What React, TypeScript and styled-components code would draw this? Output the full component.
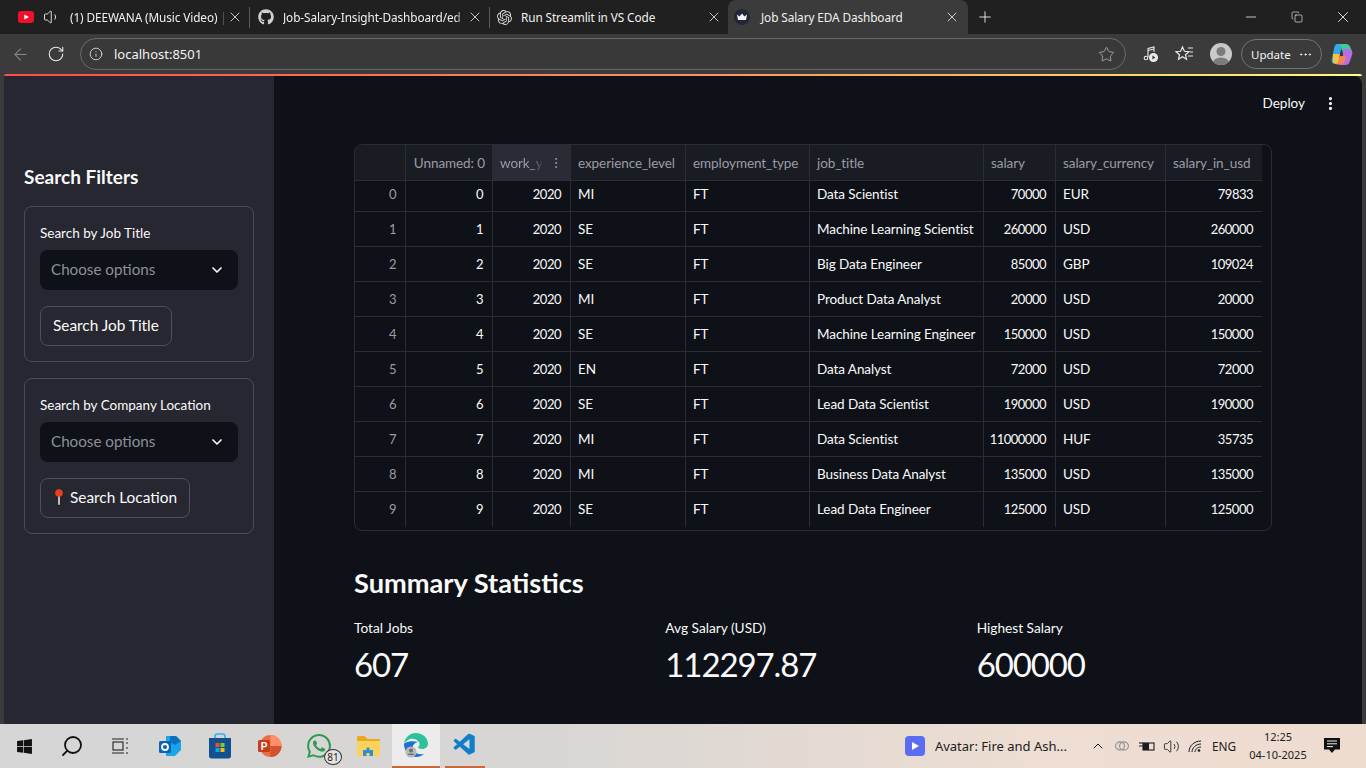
import React from "react";
import styled, { createGlobalStyle } from "styled-components";
import { ArrowLeft, ChevronDown, ChevronUp, Copy, Ellipsis, EllipsisVertical, Info, Minus, Plus, RotateCw, Star, Volume1, Volume2, X, Search } from "lucide-react";
import { FaGithub, FaWindows } from "react-icons/fa";
import { SiOpenai, SiWhatsapp } from "react-icons/si";
import { VscVscode } from "react-icons/vsc";

const UI_FONT = `"Noto Sans", "Liberation Sans", sans-serif`;
const APP_FONT = `"Lato", "Noto Sans", sans-serif`;

const GlobalStyle = createGlobalStyle`
    html, body {
        margin: 0;
        padding: 0;
        width: 1366px;
        height: 768px;
        overflow: hidden;
        background: #202020;
    }
    * { box-sizing: border-box; }
`;

const Window = styled.div`
    display: flex;
    flex-direction: column;
    width: 1366px;
    height: 768px;
    font-family: ${UI_FONT};
`;

/* browser chrome */
const TabStrip = styled.div`
    display: flex;
    align-items: stretch;
    height: 34px;
    padding-left: 8px;
    background: #202020;
    color: #f0f0f0;
`;
const Tab = styled.div<{ $active?: boolean; $width: number; $pad?: number }>`
    display: flex;
    align-items: center;
    gap: ${(p) => (p.$active ? 11 : 9)}px;
    flex: none;
    width: ${(p) => p.$width}px;
    padding: 0 ${(p) => (p.$active ? 8 : 6)}px 0 ${(p) => p.$pad ?? 10}px;
    border-radius: 8px 8px 0 0;
    background: ${(p) => (p.$active ? "#3b3b3b" : "transparent")};
    font-size: 11.8px;
    letter-spacing: -0.1px;
    & svg { flex: none; }
`;
const TabTitle = styled.span<{ $fade?: boolean }>`
    flex: 1;
    min-width: 0;
    margin-right: ${(p) => (p.$fade ? -8 : 0)}px;
    white-space: nowrap;
    -webkit-mask-image: ${(p) => (p.$fade ? "linear-gradient(90deg, #000 94%, transparent)" : "none")};
    mask-image: ${(p) => (p.$fade ? "linear-gradient(90deg, #000 94%, transparent)" : "none")};
`;
const TabDivider = styled.div`
    flex: none;
    width: 1px;
    margin: 7px 0 6px;
    background: #5a5a5a;
`;
const NewTab = styled.div`
    display: flex;
    align-items: center;
    justify-content: center;
    width: 34px;
`;
const WindowControls = styled.div`
    display: flex;
    margin-left: auto;
    align-items: center;
    padding-right: 12px;
    gap: 24px;
    color: #fff;
`;
const WindowButton = styled.div`
    display: flex;
    justify-content: center;
    width: 22px;
`;
const Toolbar = styled.div`
    display: flex;
    align-items: center;
    height: 40px;
    padding-left: 8px;
    background: #3b3b3b;
    color: #e8e8e8;
`;
const NavButton = styled.div<{ $dim?: boolean; $width: number }>`
    display: flex;
    align-items: center;
    justify-content: center;
    flex: none;
    width: ${(p) => p.$width}px;
    color: ${(p) => (p.$dim ? "#8a8a8a" : "#ececec")};
`;
const AddressBar = styled.div`
    display: flex;
    align-items: center;
    flex: none;
    width: 1046px;
    height: 32px;
    padding: 0 10px 0 8px;
    border: 1px solid #6a6a6a;
    border-radius: 16px;
    background: #393939;
    font-size: 13px;
    color: #f2f2f2;
`;
const Url = styled.span`
    flex: 1;
    margin-left: 11px;
`;
const Avatar = styled.div`
    display: flex;
    flex: none;
    width: 22px;
    height: 22px;
    margin: 0 9px 0 14px;
    border-radius: 50%;
    background: #c9c9c9;
    overflow: hidden;
`;
const UpdatePill = styled.div`
    display: flex;
    align-items: center;
    justify-content: space-between;
    flex: none;
    width: 81px;
    height: 30px;
    padding: 0 8px 0 9px;
    border: 1px solid #737373;
    border-radius: 15px;
    font-size: 11.5px;
    color: #f4f4f4;
`;
const Rainbow = styled.div`
    height: 2px;
    background: #3b3b3b;
    & > div {
        height: 2px;
        border-radius: 2px 2px 0 0;
        margin: 0 4px;
        background: linear-gradient(90deg, #ff4b4b 0%, #fd8a5e 45%, #fdb45e 70%, #fffd80 100%);
    }
`;

/* streamlit app */
const Frame = styled.div`
    display: flex;
    height: 648px;
    padding: 0 4px;
    background: #3b3b3b;
    color: #fafafa;
    font-family: ${APP_FONT};
`;
const Sidebar = styled.aside`
    display: flex;
    flex-direction: column;
    flex: none;
    width: 270px;
    padding: 89px 20px 0;
    background: #262730;
`;
const SidebarTitle = styled.h2`
    margin: 0 0 17px;
    font-size: 19px;
    line-height: 24px;
    font-weight: 700;
`;
const FilterCard = styled.section`
    display: flex;
    flex-direction: column;
    align-items: flex-start;
    height: 156px;
    margin-bottom: 16px;
    padding: 16px 15px 15px;
    border: 1px solid #4b4c55;
    border-radius: 8px;
`;
const FieldLabel = styled.label`
    font-size: 13.5px;
    line-height: 20px;
    margin-bottom: 7px;
`;
const SelectBox = styled.div`
    display: flex;
    align-items: center;
    justify-content: space-between;
    width: 198px;
    height: 40px;
    padding: 0 13px 0 11px;
    border-radius: 8px;
    background: #0e1117;
    color: #8e9099;
    font-size: 15.2px;
    line-height: 18px;
    & > span { padding-bottom: 2px; }
    & svg { color: #fafafa; }
`;
const FilterButton = styled.button`
    display: flex;
    align-items: center;
    gap: 5px;
    height: 40px;
    margin-top: 16px;
    padding: 0 12px 2px;
    border: 1px solid #4e4f58;
    border-radius: 8px;
    background: transparent;
    color: #fafafa;
    font-family: inherit;
    font-size: 15.4px;
`;
const Main = styled.main`
    flex: 1;
    display: flex;
    flex-direction: column;
    border-radius: 0 8px 0 0;
    background: #0e1117;
    overflow: hidden;
`;
const AppHeader = styled.header`
    display: flex;
    align-items: center;
    justify-content: flex-end;
    flex: none;
    height: 68px;
    padding: 0 23px 14px 0;
    gap: 17px;
    font-size: 13.5px;
`;
const Content = styled.div`
    display: flex;
    flex-direction: column;
    margin: 0 90px 0 80px;
`;
const TableFrame = styled.div`
    height: 387px;
    border: 1px solid #2b2d33;
    border-radius: 8px;
    overflow: hidden;
    font-size: 13.5px;
    letter-spacing: -0.08px;
`;
const TableRow = styled.div<{ $height: number }>`
    display: grid;
    grid-template-columns: 51px 87px 78px 115px 124px 174px 72px 110px 96px;
    width: 907px;
    height: ${(p) => p.$height}px;
    align-items: stretch;
`;
const Cell = styled.div<{ $right?: boolean; $header?: boolean; $index?: boolean; $hot?: boolean; $lastCol?: boolean; $lastRow?: boolean; $clipped?: boolean; $number?: boolean }>`
    display: flex;
    align-items: center;
    justify-content: ${(p) => (p.$hot ? "space-between" : p.$right ? "flex-end" : "flex-start")};
    padding: 0 ${(p) => (p.$number ? 9 : 7)}px ${(p) => (p.$clipped ? 4 : p.$lastRow ? 2 : 0)}px 7px;
    border-right: ${(p) => (p.$lastCol ? "none" : "1px solid #2b2d33")};
    border-bottom: ${(p) => (p.$lastRow ? "none" : "1px solid #2b2d33")};
    background: ${(p) => (p.$hot ? "#2a2c35" : p.$header ? "#1a1c24" : "transparent")};
    color: ${(p) => (p.$header || p.$index ? "#9a9ca5" : "#fafafa")};
    font-size: ${(p) => (p.$number ? "13px" : "inherit")};
    letter-spacing: ${(p) => (p.$number ? "-0.5px" : "inherit")};
    white-space: nowrap;
`;
const FadedLabel = styled.span`
    width: 44px;
    -webkit-mask-image: linear-gradient(90deg, #000 70%, transparent);
    mask-image: linear-gradient(90deg, #000 70%, transparent);
`;
const SectionTitle = styled.h2`
    margin: 35px 0 0;
    font-size: 27.2px;
    line-height: 34px;
    font-weight: 700;
`;
const Metrics = styled.div`
    display: grid;
    grid-template-columns: repeat(3, 1fr);
    gap: 16px;
    margin-top: 18px;
`;
const Metric = styled.div`
    display: flex;
    flex-direction: column;
`;
const MetricLabel = styled.div`
    font-size: 13.7px;
    line-height: 20px;
`;
const MetricValue = styled.div`
    margin-top: 1px;
    font-size: 33px;
    line-height: 50px;
    letter-spacing: -1.1px;
`;

/* taskbar */
const Taskbar = styled.footer`
    display: flex;
    align-items: center;
    height: 44px;
    padding-right: 11px;
    background: linear-gradient(90deg, #d6d6d6 0%, #d8d6d4 40%, #edddd2 75%, #efdcd1 100%);
    color: #1c1c1c;
`;
const TaskSlot = styled.div<{ $width: number; $open?: boolean; $active?: boolean; $inset?: number }>`
    position: relative;
    display: flex;
    align-items: center;
    justify-content: center;
    flex: none;
    width: ${(p) => p.$width}px;
    height: 44px;
    margin: 0 ${(p) => p.$inset ?? 0}px;
    background: ${(p) => (p.$active ? "#ececec" : "transparent")};
    border-bottom: ${(p) => (p.$open ? "2px solid #c8693a" : "none")};
`;
const Badge = styled.span`
    position: absolute;
    right: 2px;
    bottom: 3px;
    width: 18px;
    height: 16px;
    border-radius: 50%;
    border: 1px solid #333;
    background: #e4e4e4;
    font-size: 10px;
    line-height: 14px;
    text-align: center;
`;
const TraySpacer = styled.div`
    flex: 1;
`;
const MediaTitle = styled.div`
    display: flex;
    align-items: center;
    gap: 10px;
    flex: none;
    width: 185px;
    font-size: 13px;
`;
const MediaIcon = styled.div`
    display: flex;
    align-items: center;
    justify-content: center;
    width: 20px;
    height: 20px;
    border-radius: 4px;
    background: #5a6cf0;
`;
const TrayGroup = styled.div`
    display: flex;
    align-items: center;
    gap: 8px;
    font-size: 11.8px;
`;
const Language = styled.span`
    margin-left: 2px;
`;
const Clock = styled.div`
    width: 62px;
    margin-left: 11px;
    text-align: center;
    font-size: 11px;
    line-height: 18px;
`;
const NotifySlot = styled.div`
    display: flex;
    justify-content: center;
    width: 46px;
`;

type RowData = [number, number, number, string, string, string, number, string, number];
const rows: RowData[] = [
    [0, 0, 2020, "MI", "FT", "Data Scientist", 70000, "EUR", 79833],
    [1, 1, 2020, "SE", "FT", "Machine Learning Scientist", 260000, "USD", 260000],
    [2, 2, 2020, "SE", "FT", "Big Data Engineer", 85000, "GBP", 109024],
    [3, 3, 2020, "MI", "FT", "Product Data Analyst", 20000, "USD", 20000],
    [4, 4, 2020, "SE", "FT", "Machine Learning Engineer", 150000, "USD", 150000],
    [5, 5, 2020, "EN", "FT", "Data Analyst", 72000, "USD", 72000],
    [6, 6, 2020, "SE", "FT", "Lead Data Scientist", 190000, "USD", 190000],
    [7, 7, 2020, "MI", "FT", "Data Scientist", 11000000, "HUF", 35735],
    [8, 8, 2020, "MI", "FT", "Business Data Analyst", 135000, "USD", 135000],
    [9, 9, 2020, "SE", "FT", "Lead Data Engineer", 125000, "USD", 125000],
];

const YoutubeIcon = () => (
    <svg width="16" height="12" viewBox="0 0 16 12">
        <rect width="16" height="12" rx="3" fill="#f00f2c" />
        <path d="M6.3 3.4 11 6l-4.7 2.6z" fill="#fff" />
    </svg>
);
const CrownIcon = () => (
    <svg width="16" height="16" viewBox="0 0 16 16">
        <circle cx="8" cy="8" r="8" fill="#23263a" />
        <path d="M3 5.500 5.600 7.400 8 4.400l2.400 3 2.600-1.900-1 5.500H4z" fill="#f4f4f4" />
    </svg>
);
const MusicIcon = () => (
    <svg width="18" height="18" viewBox="0 0 18 18" fill="none" stroke="#e8e8e8" strokeWidth="1.1">
        <path d="M7 12V3.500l6-1.500v5" />
        <path d="M7 5.500l6-1.500" />
        <circle cx="5" cy="13" r="1.800" />
        <circle cx="12.500" cy="12.500" r="4" fill="#e8e8e8" />
        <path d="M11.400 10.600v3.800l3-1.900z" fill="#3b3b3b" stroke="none" />
    </svg>
);
const FavoritesIcon = () => (
    <svg width="20" height="18" viewBox="0 0 20 18" fill="none" stroke="#e8e8e8" strokeWidth="1.2">
        <path d="M7.500 2l1.900 4.300 4.600.4-3.500 3 1 4.500-4-2.400-4 2.400 1-4.500L1 6.700l4.600-.4z" />
        <path d="M13 3h5M15 7h3M13 11h5" />
    </svg>
);
const CopilotIcon = () => (
    <svg width="24" height="24" viewBox="0 0 24 24">
        <path d="M7 2h6l-3 9-3 11H5c-3 0-4-3-3-6l2-9c.5-3 1.500-5 3-5z" fill="#37a9e8" />
        <path d="M10 2h6c3 0 4 2 5 5l1 4h-9z" fill="#3ccf91" />
        <path d="M13 7h6c3 0 4 3 3 6l-2 6c-1 3-2 4-5 4H9l4-9z" fill="#b86ce8" />
        <path d="M5 22c4 1 9 1 10-3l1-5h-6z" fill="#f5835a" />
        <path d="M3 12h7l-2 8c-1 2-4 2-5 0z" fill="#f5c33b" />
    </svg>
);
const PinIcon = () => (
    <svg width="12" height="18" viewBox="0 0 12 18">
        <rect x="5" y="7" width="2" height="10" fill="#f2f2f2" stroke="#222" strokeWidth="0.5" />
        <circle cx="6" cy="5" r="3.800" fill="#e8401c" />
    </svg>
);
const OutlookIcon = () => (
    <svg width="24" height="24" viewBox="0 0 24 24">
        <path d="M8 2h10l5 5v9l-6 6H8z" fill="#1aa5e8" />
        <path d="M12 2h6l5 5-6 4-5-3z" fill="#0d6fc0" />
        <rect x="1" y="7" width="12" height="12" rx="1.500" fill="#0a64b8" />
        <circle cx="7" cy="13" r="3" fill="none" stroke="#fff" strokeWidth="1.800" />
    </svg>
);
const StoreIcon = () => (
    <svg width="24" height="26" viewBox="0 0 24 26">
        <path d="M7 6V3.500C7 2 8 1 9.500 1h5C16 1 17 2 17 3.500V6" fill="none" stroke="#2bb3ea" strokeWidth="1.600" />
        <path d="M1 5h22v18c0 1.500-1 2.500-2.500 2.500h-17C2 25.500 1 24.500 1 23z" fill="#12508f" />
        <rect x="7.500" y="10" width="4" height="4" fill="#f1511b" />
        <rect x="12.500" y="10" width="4" height="4" fill="#80cc28" />
        <rect x="7.500" y="15" width="4" height="4" fill="#00adef" />
        <rect x="12.500" y="15" width="4" height="4" fill="#fbbc09" />
    </svg>
);
const PowerPointIcon = () => (
    <svg width="25" height="24" viewBox="0 0 25 24">
        <circle cx="13.500" cy="12" r="11" fill="#ed6c47" />
        <path d="M13.500 1a11 11 0 0 1 11 11h-11z" fill="#ff8f6b" />
        <path d="M13.500 12h11a11 11 0 0 1-11 11z" fill="#d35230" />
        <rect x="1" y="6" width="12" height="12" rx="1.500" fill="#c43e1c" />
        <text x="7" y="15.500" fontSize="10" fontWeight="700" fill="#fff" textAnchor="middle" fontFamily="Liberation Sans">P</text>
    </svg>
);
const FolderIcon = () => (
    <svg width="24" height="22" viewBox="0 0 24 22">
        <path d="M1 2.500C1 1.500 1.500 1 2.500 1h6l3 3h11c1 0 1.500.5 1.500 1.500V8H1z" fill="#e9a91d" />
        <path d="M1 6h23v13.500c0 1-.5 1.500-1.500 1.500h-20C1.500 21 1 20.500 1 19.500z" fill="#fdd25c" />
        <path d="M7 21v-6h3.500v-2.500h3V15H17v6h-3.500v-3h-3v3z" fill="#2a8fd6" />
    </svg>
);
const EdgeIcon = () => (
    <svg width="26" height="26" viewBox="0 0 26 26">
        <path d="M1 12C2 5 7 1 13 1c7 0 12 5 12 11 0 3-3 5-6 5-2 0-4-1-4-2 2-1 2-3 1-5-2-3-6-4-9-3-3 1-5 3-6 5z" fill="#2bc19a" />
        <path d="M1 12c0 7 5 13 12 13 3 0 6-1 8-3-4 1-9 0-11-4-1-3 0-7 5-8-6-2-13 0-14 2z" fill="#1a72d2" />
        <circle cx="8" cy="20" r="5.500" fill="#b9b9b9" />
        <circle cx="8" cy="18.500" r="2" fill="#6d6d6d" />
        <path d="M4.500 23c.5-2 6.500-2 7 0z" fill="#6d6d6d" />
    </svg>
);
const NotifyIcon = () => (
    <svg width="16" height="16" viewBox="0 0 16 16">
        <path d="M0 0h16v11.500h-5l-3 3.500-3-3.500H0z" fill="#111" />
        <path d="M3 3h10M3 5.800h10M3 8.600h6" stroke="#eee" strokeWidth="1" />
    </svg>
);
const BatteryIcon = () => (
    <svg width="17" height="12" viewBox="0 0 17 12" fill="none" stroke="#1c1c1c" strokeWidth="1.100">
        <rect x="5" y="3" width="11" height="7" />
        <rect x="5.500" y="3.500" width="5" height="6" fill="#1c1c1c" />
        <path d="M1 6h4M2 2v2M4 2v2" />
    </svg>
);
const WifiIcon = () => (
    <svg width="14" height="14" viewBox="0 0 14 14" fill="none" stroke="#1c1c1c" strokeWidth="1">
        <path d="M1 13C1 7 6 2 13 2M4 13c0-4 4-8 9-8M7 13c0-2 2-5 6-5" />
        <circle cx="11" cy="11.500" r="1.300" fill="#1c1c1c" stroke="none" />
    </svg>
);
const CloudIcon = () => (
    <svg width="16" height="12" viewBox="0 0 16 12" fill="none" stroke="#9a9a9a" strokeWidth="1.300">
        <ellipse cx="6" cy="6" rx="4.500" ry="4" />
        <ellipse cx="10" cy="6" rx="4.500" ry="4" />
    </svg>
);

const columns = ["Unnamed: 0", "work_y", "experience_level", "employment_type", "job_title", "salary", "salary_currency", "salary_in_usd"];

const FilterPanel = (props: { label: string; button: string; pin?: boolean }) => (
    <FilterCard>
        <FieldLabel>{props.label}</FieldLabel>
        <SelectBox>
            <span>Choose options</span>
            <ChevronDown size={16} strokeWidth={2.5} />
        </SelectBox>
        <FilterButton>
            {props.pin && <PinIcon />}
            {props.button}
        </FilterButton>
    </FilterCard>
);

export default function App() {
    return (
        <Window>
            <GlobalStyle />
            <TabStrip>
                <Tab $width={241}>
                    <YoutubeIcon />
                    <Volume1 size={18} strokeWidth={1.2} />
                    <TabTitle $fade>(1) DEEWANA (Music Video) |</TabTitle>
                    <X size={16} strokeWidth={1.2} />
                </Tab>
                <TabDivider />
                <Tab $width={239} $pad={8}>
                    <FaGithub size={16} color="#d0d0d0" />
                    <TabTitle $fade>Job-Salary-Insight-Dashboard/ed</TabTitle>
                    <X size={16} strokeWidth={1.2} />
                </Tab>
                <TabDivider />
                <Tab $width={238} $pad={7}>
                    <SiOpenai size={15} color="#d8d8d8" />
                    <TabTitle>Run Streamlit in VS Code</TabTitle>
                    <X size={16} strokeWidth={1.2} />
                </Tab>
                <Tab $active $pad={6} $width={240}>
                    <CrownIcon />
                    <TabTitle>Job Salary EDA Dashboard</TabTitle>
                    <X size={16} strokeWidth={1.2} />
                </Tab>
                <NewTab>
                    <Plus size={18} strokeWidth={1.2} />
                </NewTab>
                <WindowControls>
                    <WindowButton><Minus size={16} strokeWidth={1.1} /></WindowButton>
                    <WindowButton><Copy size={12} strokeWidth={1.2} /></WindowButton>
                    <WindowButton><X size={18} strokeWidth={1.1} /></WindowButton>
                </WindowControls>
            </TabStrip>
            <Toolbar>
                <NavButton $dim $width={24}><ArrowLeft size={19} strokeWidth={1.3} /></NavButton>
                <NavButton $width={48}><RotateCw size={18} strokeWidth={1.4} /></NavButton>
                <AddressBar>
                    <Info size={14} strokeWidth={1.3} />
                    <Url>localhost:8501</Url>
                    <Star size={17} strokeWidth={1.1} color="#b8b8b8" />
                </AddressBar>
                <NavButton $width={48}><MusicIcon /></NavButton>
                <NavButton $width={22}><FavoritesIcon /></NavButton>
                <Avatar>
                    <svg width="22" height="22" viewBox="0 0 22 22">
                        <circle cx="11" cy="8.500" r="4.500" fill="#7c7c7c" />
                        <ellipse cx="11" cy="20" rx="8" ry="5.500" fill="#7c7c7c" />
                    </svg>
                </Avatar>
                <UpdatePill>
                    Update
                    <Ellipsis size={15} strokeWidth={1.6} />
                </UpdatePill>
                <NavButton $width={40}><CopilotIcon /></NavButton>
            </Toolbar>
            <Rainbow><div /></Rainbow>
            <Frame>
                <Sidebar>
                    <SidebarTitle>Search Filters</SidebarTitle>
                    <FilterPanel label="Search by Job Title" button="Search Job Title" />
                    <FilterPanel label="Search by Company Location" button="Search Location" pin />
                </Sidebar>
                <Main>
                    <AppHeader>
                        Deploy
                        <EllipsisVertical size={17} strokeWidth={2.5} />
                    </AppHeader>
                    <Content>
                        <TableFrame>
                            <TableRow $height={36}>
                                <Cell $header />
                                {columns.map((c, i) => (
                                    <Cell key={c} $header $hot={i === 1} $right={i === 0} $lastCol={i === columns.length - 1}>
                                        {i === 1 ? <FadedLabel>{c}</FadedLabel> : c}
                                        {i === 1 && <EllipsisVertical size={14} strokeWidth={1.6} />}
                                    </Cell>
                                ))}
                            </TableRow>
                            {rows.map((r, idx) => (
                                <TableRow key={r[0]} $height={idx === 0 ? 31 : 35}>
                                    {r.map((v, i) => (
                                        <Cell
                                            key={i}
                                            $index={i === 0}
                                            $right={typeof v === "number"}
                                            $number={typeof v === "number"}
                                            $clipped={idx === 0}
                                            $lastCol={i === r.length - 1}
                                            $lastRow={idx === rows.length - 1}
                                        >
                                            {v}
                                        </Cell>
                                    ))}
                                </TableRow>
                            ))}
                        </TableFrame>
                        <SectionTitle>Summary Statistics</SectionTitle>
                        <Metrics>
                            <Metric><MetricLabel>Total Jobs</MetricLabel><MetricValue>607</MetricValue></Metric>
                            <Metric><MetricLabel>Avg Salary (USD)</MetricLabel><MetricValue>112297.87</MetricValue></Metric>
                            <Metric><MetricLabel>Highest Salary</MetricLabel><MetricValue>600000</MetricValue></Metric>
                        </Metrics>
                    </Content>
                </Main>
            </Frame>
            <Taskbar>
                <TaskSlot $width={48}><FaWindows size={17} color="#111" /></TaskSlot>
                <TaskSlot $width={48}><Search size={24} strokeWidth={1.8} color="#111" style={{ transform: "scaleX(-1)" }} /></TaskSlot>
                <TaskSlot $width={48}>
                    <svg width="18" height="18" viewBox="0 0 18 18" fill="none" stroke="#222" strokeWidth="1.100">
                        <rect x="2" y="5" width="10" height="8" />
                        <path d="M1 2h12M1 16h12M15 2h2M15 6h2M15 11h2M15 16h2" />
                    </svg>
                </TaskSlot>
                <TaskSlot $width={52}><OutlookIcon /></TaskSlot>
                <TaskSlot $width={48}><StoreIcon /></TaskSlot>
                <TaskSlot $width={50}><PowerPointIcon /></TaskSlot>
                <TaskSlot $width={50}>
                    <SiWhatsapp size={24} color="#2f9a50" />
                    <Badge>81</Badge>
                </TaskSlot>
                <TaskSlot $width={48}><FolderIcon /></TaskSlot>
                <TaskSlot $width={48} $active $open><EdgeIcon /></TaskSlot>
                <TaskSlot $width={40} $inset={5} $open><VscVscode size={26} color="#0f7fcc" /></TaskSlot>
                <TraySpacer />
                <MediaTitle>
                    <MediaIcon>
                        <svg width="10" height="10" viewBox="0 0 10 10"><path d="M2 1l7 4-7 4z" fill="#fff" /></svg>
                    </MediaIcon>
                    Avatar: Fire and Ash...
                </MediaTitle>
                <TrayGroup>
                    <ChevronUp size={16} strokeWidth={1.5} />
                    <CloudIcon />
                    <BatteryIcon />
                    <Volume2 size={17} strokeWidth={1.2} />
                    <WifiIcon />
                    <Language>ENG</Language>
                </TrayGroup>
                <Clock>12:25<br />04-10-2025</Clock>
                <NotifySlot><NotifyIcon /></NotifySlot>
            </Taskbar>
        </Window>
    );
}
